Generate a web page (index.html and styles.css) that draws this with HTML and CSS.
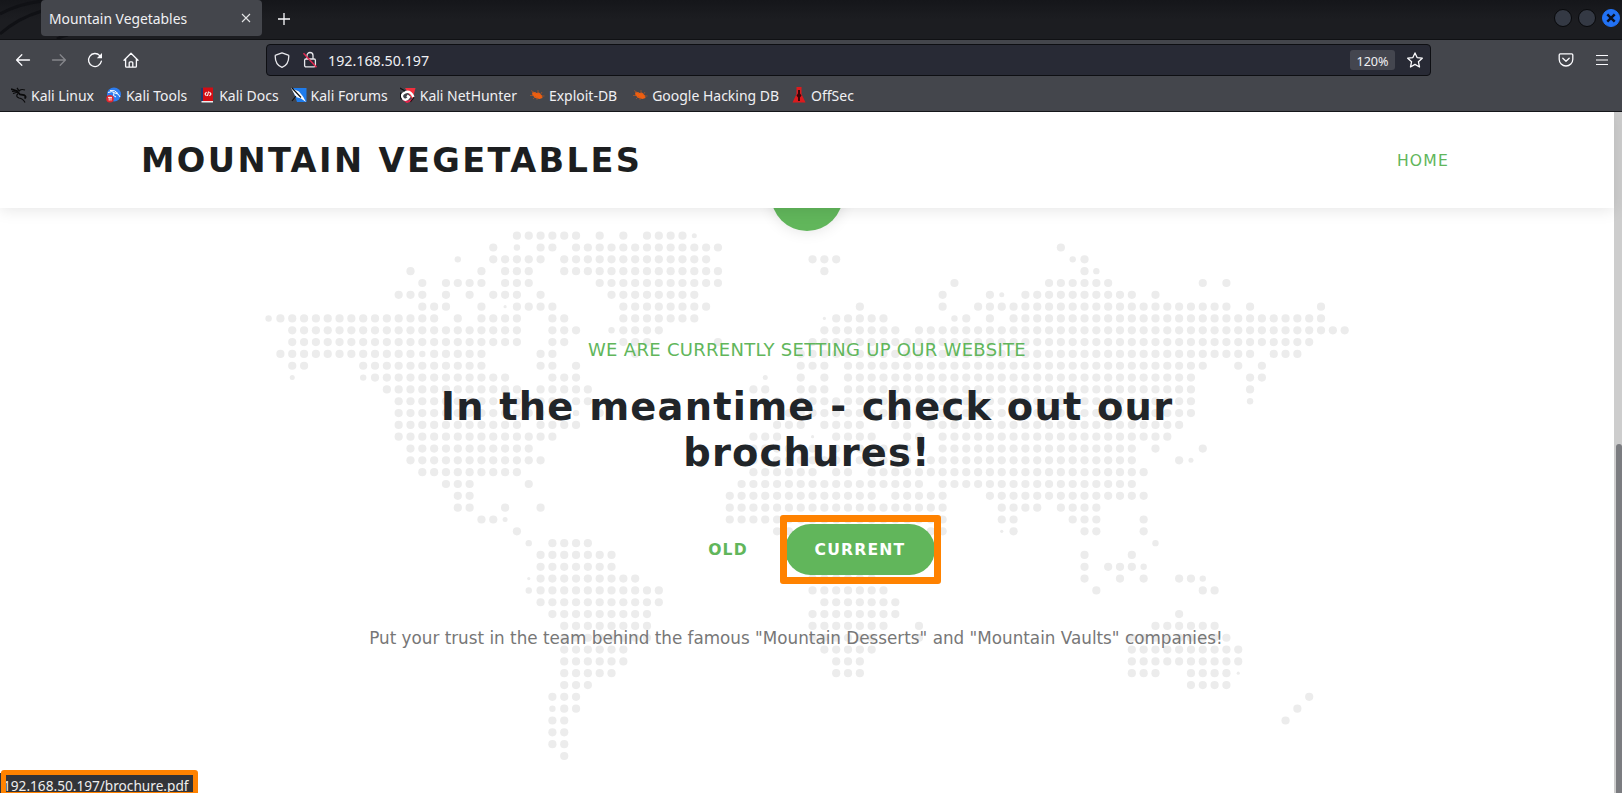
FILE: index.html
```html
<!DOCTYPE html>
<html lang="en">
<head>
<meta charset="utf-8">
<title>Mountain Vegetables</title>
<link rel="stylesheet" href="styles.css">
</head>
<body>
<div class="browser">
  <div class="tabbar">
    <svg class="tabbar-art" width="70" height="39" viewBox="0 0 70 39" fill="none" stroke="#101115" stroke-width="3"><path d="M0 14Q18 4 42 1M0 34Q18 18 42 11M57 39Q62 36 68 35"/></svg>
    <div class="tab"><span class="tab-title">Mountain Vegetables</span>
      <svg width="10" height="10" viewBox="0 0 10 10" stroke="#e4e4e6" stroke-width="1.1"><path d="M1 1l8 8M9 1l-8 8"/></svg>
    </div>
    <svg class="new-tab" width="12" height="12" viewBox="0 0 12 12" stroke="#fbfbfe" stroke-width="1.3"><path d="M6 0v12M0 6h12"/></svg>
    <div class="window-buttons"><i class="win"></i><i class="win"></i><i class="win close"><svg width="10" height="10" viewBox="0 0 10 10" stroke="#0b1020" stroke-width="2.4"><path d="M1.3 1.3l7.4 7.4M8.7 1.3l-7.4 7.4"/></svg></i></div>
  </div>
  <div class="toolbar">
    <div class="nav-icons">
      <svg width="16" height="16" viewBox="0 0 16 16" fill="none" stroke="#fbfbfe" stroke-width="1.3" stroke-linecap="round" stroke-linejoin="round"><path d="M14.5 8H1.8M6.8 2.8L1.6 8l5.2 5.2"/></svg>
      <svg width="16" height="16" viewBox="0 0 16 16" fill="none" stroke="#85868b" stroke-width="1.3" stroke-linecap="round" stroke-linejoin="round"><path d="M1.5 8h12.7M9.2 2.8L14.4 8l-5.2 5.2"/></svg>
      <svg width="16" height="16" viewBox="0 0 16 16" fill="none" stroke="#fbfbfe" stroke-width="1.3" stroke-linecap="round"><path d="M14.4 9.2A6.500 6.500 0 1 1 12.800 3.600"/><path d="M15 1v5.200H9.800z" fill="#fbfbfe" stroke="none"/></svg>
      <svg width="16" height="16" viewBox="0 0 16 16" fill="none" stroke="#fbfbfe" stroke-width="1.3" stroke-linecap="round" stroke-linejoin="round"><path d="M1 8.2l7-7 7 7M2.6 6.8v7.4q0 1 1 1h8.8q1 0 1-1V6.8M6.2 15v-4.2q0-1 1-1h1.6q1 0 1 1V15"/></svg>
    </div>
    <div class="urlbar">
      <svg width="16" height="16" viewBox="0 0 16 16" fill="none" stroke="#e8e8ec" stroke-width="1.3" stroke-linejoin="round"><path d="M8 .9l6.3 2.3q.5 0 .5.7C14.8 9 12.6 13.6 8 15.3 3.400 13.600 1.200 9 1.200 3.900q0-.7.5-.7z"/></svg>
      <svg class="lock" width="16" height="18" viewBox="0 0 16 18" fill="none" stroke="#e8e8ec" stroke-width="1.3"><rect x="2.600" y="8" width="10.800" height="7.800" rx="1.300"/><path d="M5 8V4.500a3 3 0 0 1 6 0V8"/><path d="M1.500 2.200l13 14" stroke="#e22850" stroke-width="1.500"/></svg>
      <span class="url">192.168.50.197</span>
      <span class="zoom">120%</span>
      <svg class="star" width="16" height="16" viewBox="0 0 16 16" fill="none" stroke="#fbfbfe" stroke-width="1.3" stroke-linejoin="round"><path d="M8 .9l2.100 4.700 5.200.6-3.900 3.500 1.100 5.300L8 12.400 3.500 15l1.100-5.300L.7 6.200l5.200-.6z"/></svg>
    </div>
    <div class="menu-icons">
      <svg width="16" height="14" viewBox="0 0 16 14" fill="none" stroke="#fbfbfe" stroke-width="1.300" stroke-linecap="round" stroke-linejoin="round"><path d="M2.300.900h11.400q1.100 0 1.100 1.100v4.200a6.800 6.800 0 0 1-13.600 0V2q0-1.100 1.100-1.100zM4.800 5.200L8 8.300l3.200-3.100"/></svg>
      <svg width="12" height="12" viewBox="0 0 12 12" stroke="#fbfbfe" stroke-width="1.200"><path d="M0 1.500h12M0 6h12M0 10.500h12"/></svg>
    </div>
  </div>
  <div class="bookmarks">
    <span class="bm"><svg width="16" height="16" viewBox="0 0 16 16" fill="none" stroke="#0a0a0b"><path stroke-width="1.800" d="M0 2l6 2 3 3.500 4 .500q3 2 .500 3.500"/><path stroke-width="1.200" d="M1 4.500l5-.5M2 6.500l5-1.500M8 4.500q1-3 6-1.500M7 6.500q-3 3 1 4.500 4 .500 6 4.500M6 .8l2 3"/></svg>Kali Linux</span>
    <span class="bm"><svg width="16" height="16" viewBox="0 0 16 16"><circle cx="8" cy="7.500" r="7" fill="#2d7df0"/><path d="M2 5.500q4-2 7 .5 4 .5 5 4M4 3.500q5-1 8 3M8 6q-2 3 2 4" fill="none" stroke="#fff" stroke-width="1"/><circle cx="4" cy="11.700" r="3.800" fill="#e2262c"/><path d="M2 10.400h4M3.200 10.400v3.200M5 10.400v3.200" stroke="#fff" stroke-width=".9"/></svg>Kali Tools</span>
    <span class="bm"><svg width="16" height="16" viewBox="0 0 16 16"><path fill="#22386e" d="M2 1h2v13H2z"/><path fill="#d40d14" d="M4 .5h10v13.500H4z"/><path fill="#eee" d="M2.500 14H14v1.500H2.500z"/><path d="M7.500 5L6 7l1.500 2M10.500 5L12 7l-1.500 2M8.500 9l1-4.500" fill="none" stroke="#fff" stroke-width="1.100"/></svg>Kali Docs</span>
    <span class="bm"><svg width="16" height="16" viewBox="0 0 16 16"><path fill="#1f7cec" d="M1 1h14.500v14H6z"/><path fill="#fff" d="M0 1l8 3.500 4 5 3 5.500-5-3.500L5 10z"/><path d="M1 1l9 9.500M5 9l-4 5" stroke="#111" stroke-width="1.200"/></svg>Kali Forums</span>
    <span class="bm"><svg width="16" height="16" viewBox="0 0 16 16"><path fill="#f22f3d" d="M5 1h10.500l-3 11.500z"/><path fill="none" stroke="#e4254c" stroke-width="2" d="M3 12l4 3 5-2"/><path fill="none" stroke="#fff" stroke-width="2.400" d="M13.500 10Q10 3 5 5.500t-2 6q3 3 6-1.500L7 8.500"/><path fill="none" stroke="#101012" stroke-width="1.100" d="M0 1l5 3M1 5.500q-1.500 4 .5 7M14 10.500l-3.500 4.500"/></svg>Kali NetHunter</span>
    <span class="bm"><svg width="16" height="16" viewBox="0 0 16 16"><path fill="#ee5f10" d="M3 5.500l3-.5 1.500 1L10 5.500l3 3 .5 2.500-3 1-4-1-3-2.500z"/><path d="M2 3.500l5 3M1 8.500h4M4 12l3-3M9 3v4M13 5l-2 3M15.500 9H12M8 10v3" stroke="#c9571c" stroke-width=".6"/></svg>Exploit-DB</span>
    <span class="bm bm-ghdb"><svg width="16" height="16" viewBox="0 0 16 16"><path fill="#ee5f10" d="M3 5.500l3-.5 1.500 1L10 5.500l3 3 .5 2.500-3 1-4-1-3-2.500z"/><path d="M2 3.500l5 3M1 8.500h4M4 12l3-3M9 3v4M13 5l-2 3M15.500 9H12M8 10v3" stroke="#c9571c" stroke-width=".6"/></svg>Google Hacking DB</span>
    <span class="bm"><svg width="16" height="16" viewBox="0 0 16 16"><path fill="#dd1a1d" d="M5.500 0h5v7l4 8.500h-13l4-8.500z"/><path fill="#3a0607" d="M7 3h2v3.500l1.500 2-1.500 2V14H7v-3.500l-1.500-2L7 6.500z"/></svg>OffSec</span>
  </div>
</div>
<div class="page">
  <main class="site">
    <header class="site-header"><h1 class="brand">MOUNTAIN VEGETABLES</h1><a class="home">HOME</a></header>
    <section class="hero">
      <div class="round-icon"></div>
      <svg class="map" id="map" width="1094" height="550" viewBox="-8.600 -7.700 1094 550" fill="#ececec"></svg>
      <p class="kicker">WE ARE CURRENTLY SETTING UP OUR WEBSITE</p>
      <h2 class="headline">In the meantime - check out our<br>brochures!</h2>
      <div class="buttons"><a class="btn old">OLD</a><a class="btn current">CURRENT</a><span class="mark mark-button"></span></div>
      <p class="note">Put your trust in the team behind the famous "Mountain Desserts" and "Mountain Vaults" companies!</p>
    </section>
  </main>
  <div class="scrollbar"><i class="thumb"></i></div>
  <div class="status">192.168.50.197/brochure.pdf</div>
  <span class="mark mark-status"></span>
</div>
<script src="map.js"></script>
</body>
</html>
```
FILE: map.js
```js
// Land dots per latitude row: column numbers or ranges; suffix m/s/t marks smaller dots.
const rows = [
  "21-26 28 30 32-35 36s",
  "19 21m 23 24 26-38 67",
  "16m 19-23 25-37 46-48 68m 69",
  "12 18 20-22 25-38 47 69 70m",
  "13 15-18 20-22 28-38 58 66-71 79 81",
  "11-13 15 17 19-21 23 29-36 57 61 62s 64-73 75",
  "13-15 18 20t 21-24 30-37 50 57 60-81 83 89",
  "0m 1-14 16 18-21 24 25 30-36 47t 48-52 58m 59 61 63-89",
  "2-21 24-26 29m 30-33 47-53 55-91",
  "2-21 24 25 30-32 38 46-88",
  "1-12 13m 14-18 23 24 31 45-83 85-87",
  "2 3 8-18 23 24 26 45-47 49-79 82 84",
  "2s 8m 9-20 24-26 42s 45 47 49-78 83 84",
  "10-21 23-27 41 42 45-47 49-78 83",
  "11-24 26 27 43 45-78 83m",
  "11-24 26m 28 44-78",
  "11-21 23-26 43-45 47-50 53 54 56-77",
  "11-24 41-43 46t 48-51 54 55 57-76",
  "12-22 41-46 48-54 57-73 75 79",
  "12-23 41-48 50-54 56-73 77 78s",
  "13-21 41-46 48 49 51-74",
  "15-17 22 40-55 57-73",
  "16 17 39-51 53-57 61-74",
  "16 17 20 23 39-57 62-65 67-70",
  "18 19 20s 39-57 62 63 68-70 74",
  "21 43-57 62t 63 69 70 74",
  "22m 24-27 75m",
  "23-29 69 73",
  "23-29 69 71-73 74m",
  "22t 23-31 46-51 69 72 74 77 78 79m",
  "22m 23-33 46-52 70 79 80",
  "23-33 47-53",
  "24-32 46-53 77",
  "25-32 46-52 55 75-80",
  "25-32 46-51 55 73-81",
  "25-30 47-51 73-82",
  "25-30 48-50 73-82",
  "25-29 48-50 73-75 78-81 82t",
  "25-27 78-81",
  "24-26 88",
  "24m 25 26 87",
  "24 25 86",
  "24 25",
  "24 25",
  "25"
];
const pitch = 11.825;
const radius = { "": 4.1, m: 3.200, s: 2.500, t: 1.600 };
let dots = "";
rows.forEach((row, r) => {
  for (const token of row.split(" ")) {
    const [, from, to, size] = token.match(/^(\d+)(?:-(\d+))?([mst]?)$/);
    for (let c = +from; c <= +(to || from); c++) {
      dots += `<circle cx="${(c * pitch).toFixed(2)}" cy="${(r * pitch).toFixed(2)}" r="${radius[size]}"/>`;
    }
  }
});
document.getElementById("map").innerHTML = dots;
```
FILE: styles.css
```css
* { box-sizing: border-box; }
body { margin: 0; width: 1622px; height: 793px; overflow: hidden; background: #fff; display: flex; flex-direction: column; font-family: "Noto Sans", sans-serif; }
h1, h2, p { margin: 0; }
svg { flex: none; display: block; }
.browser { height: 112px; flex: none; background: #44464c; border-bottom: 1px solid #15161a; color: #f0f0f3; }
.tabbar { height: 40px; display: flex; align-items: flex-start; position: relative; background: linear-gradient(#15161a, #1c1d21 50%, #1c1d21); border-bottom: 1px solid #101114; padding-left: 41px; }
.tabbar-art { position: absolute; left: 0; top: 0; }
.tab { position: relative; width: 221px; height: 36px; background: #44464c; border-radius: 4px; display: flex; align-items: center; justify-content: space-between; padding: 0 11px 0 8px; }
.tab-title { font-size: 13.87px; }
.new-tab { margin: 13px 0 0 16px; }
.window-buttons { margin: 9px 2px 0 auto; display: flex; gap: 6px; }
.win { width: 18px; height: 18px; border-radius: 50%; background: #343944; border: 1px solid #08090b; display: flex; align-items: center; justify-content: center; }
.close { background: #2272f5; border-color: #2272f5; }
.toolbar { height: 40px; display: flex; align-items: center; padding: 0 14px 0 15px; }
.nav-icons { display: flex; gap: 20px; width: 251px; }
.urlbar { width: 1165px; height: 32px; background: #282a35; border: 1px solid #0e0f13; border-radius: 4px; display: flex; align-items: center; padding: 0 7px; }
.lock { margin-left: 12px; }
.url { margin-left: 10px; font-size: 14.25px; }
.zoom { margin-left: auto; width: 45px; height: 20px; line-height: 23px; border-radius: 3px; background: #44464f; font-size: 12.6px; text-align: center; }
.star { margin-left: 12px; }
.menu-icons { margin-left: auto; display: flex; align-items: center; gap: 22px; }
.bookmarks { height: 30px; display: flex; align-items: center; padding: 0 0 0 11px; gap: 12px; }
.bm { display: flex; align-items: center; gap: 4px; font-size: 13.98px; white-space: nowrap; }
.bm-ghdb { margin-left: 3px; }
.page { position: relative; flex: 1; display: flex; overflow: hidden; }
.site { width: 1614px; }
.site-header { position: relative; z-index: 2; height: 96px; background: #fff; box-shadow: 0 2px 15px rgba(0,0,0,.1); display: flex; align-items: center; justify-content: space-between; padding: 2px 165px 0 141px; }
.brand { font: bold 33.6px/1.2 "DejaVu Sans", sans-serif; letter-spacing: 2.4px; color: #1c1e20; }
.home { padding-top: 2px; font: 15.6px/1.5 "DejaVu Sans", sans-serif; letter-spacing: 1.2px; color: #61b65b; }
.hero { position: relative; z-index: 1; height: 585px; display: flex; flex-direction: column; align-items: center; font-family: "DejaVu Sans", sans-serif; }
.round-icon { width: 72px; height: 72px; margin-top: -49px; flex: none; border-radius: 50%; background: #61b65b; box-shadow: 0 0 15px rgba(0,0,0,.12); }
.map { position: absolute; left: 260px; top: 20px; z-index: -1; }
.kicker { margin-top: 105px; font-size: 18px; line-height: 27px; letter-spacing: .3px; color: #61b65b; white-space: nowrap; }
.headline { margin-top: 21px; text-align: center; font-size: 38.4px; line-height: 46px; letter-spacing: 1.2px; color: #212529; white-space: nowrap; }
.buttons { position: relative; margin-top: 48px; display: flex; gap: 8px; }
.btn { height: 51px; line-height: 52px; border-radius: 26px; text-align: center; font-weight: bold; font-size: 15.6px; letter-spacing: 1.2px; }
.old { width: 98px; background: #fff; color: #61b65b; }
.current { width: 150px; background: #61b65b; color: #fff; }
.mark { position: absolute; border: 7px solid #ff8200; border-radius: 3px; }
.mark-button { right: -6px; top: -9px; width: 161px; height: 69px; }
.note { margin: 51px 22px 0 0; font-size: 16.8px; line-height: 25px; color: #777; white-space: nowrap; }
.scrollbar { width: 8px; background: #cdcdcd; }
.thumb { display: block; margin: 332px 0 0 2px; width: 6px; height: 360px; background: #7b7c80; border-radius: 3px; }
.status { position: absolute; left: 0; top: 661px; width: 194px; height: 20px; padding-left: 3px; background: #333438; color: #eee; font-size: 13.65px; line-height: 26px; white-space: nowrap; }
.mark-status { left: 1px; top: 658px; width: 197px; height: 27px; border-width: 5px; }
```
